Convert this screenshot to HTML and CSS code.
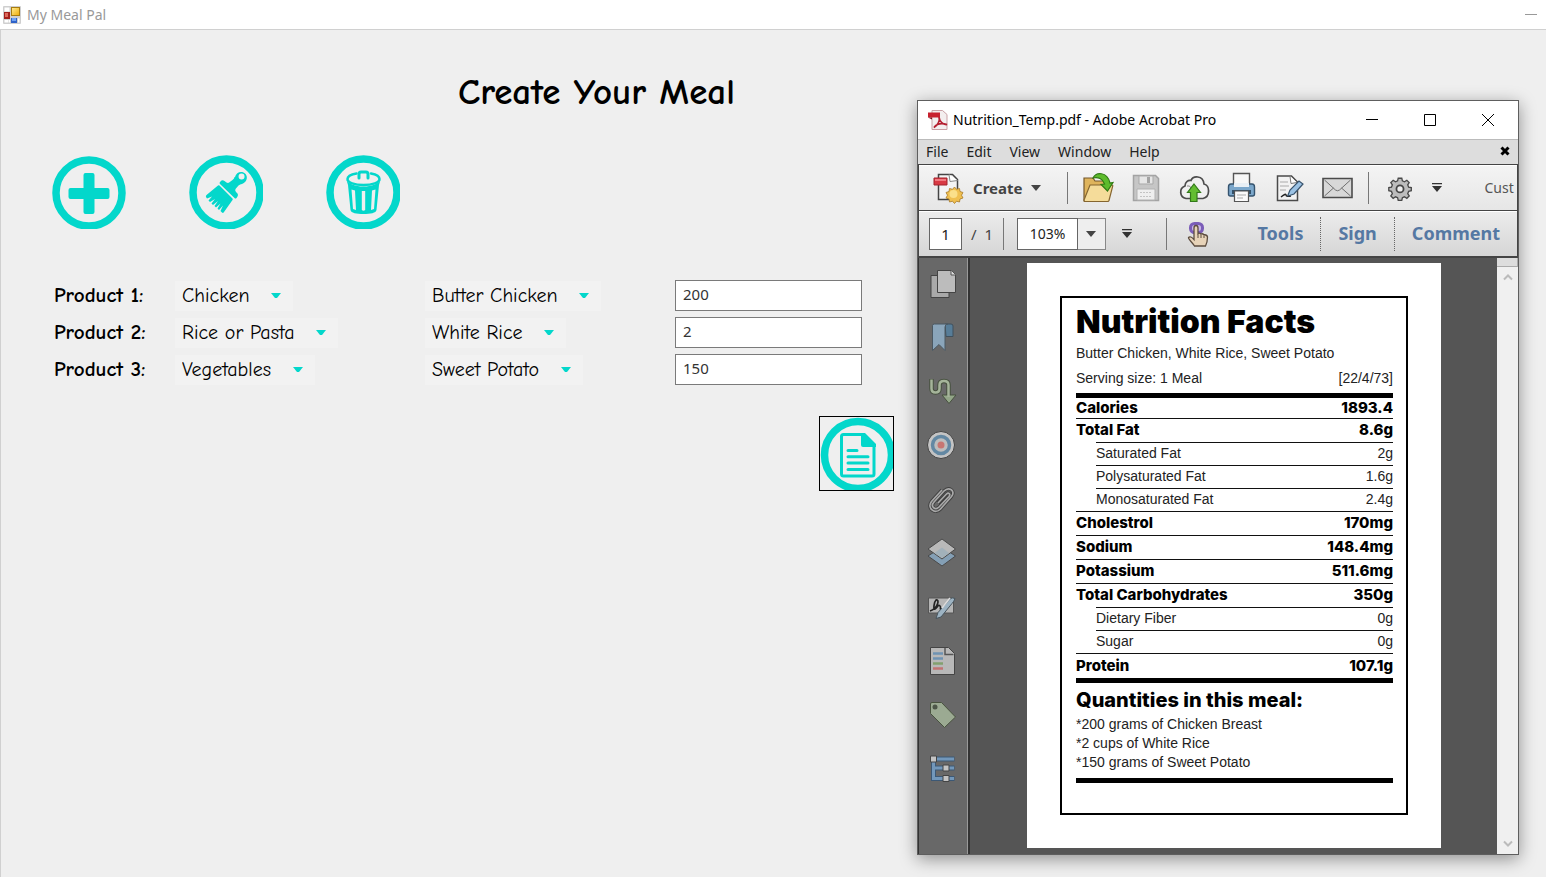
FILE: index.html
```html
<!DOCTYPE html>
<html lang="en">
<head>
<meta charset="utf-8">
<title>My Meal Pal</title>
<link rel="stylesheet" href="styles.css">
</head>
<body>
<div class="app">
  <header class="app-bar">
    <svg class="app-logo" viewBox="0 0 18 18" aria-hidden="true">
      <defs>
        <linearGradient id="gold" x1="0" y1="0" x2="1" y2="1"><stop offset="0" stop-color="#ffe98a"/><stop offset="1" stop-color="#f0b010"/></linearGradient>
      </defs>
      <rect width="18" height="18" rx="1" fill="#cfcfcf"/>
      <path d="M1.500 1.500h5v4h-5zM1.500 14h4v2.500h-4zM6 14h1v2.500H6zM15 12.500h1.500v4H15z" fill="#fff"/>
      <rect x="8" y="1" width="9" height="9" fill="#a87c10"/>
      <rect x="9" y="2" width="7" height="7" fill="url(#gold)"/>
      <rect x="1" y="6" width="6" height="7" fill="#a3201c"/>
      <rect x="2" y="7" width="3" height="4" fill="#dc6a5c"/>
      <rect x="8" y="12" width="6" height="5" fill="#2e62c8"/>
      <rect x="9" y="12" width="4" height="3" fill="#6fa2f4"/>
    </svg>
    <span class="app-name">My Meal Pal</span>
    <button class="app-min" aria-label="Minimize"></button>
  </header>

  <main class="meal">
    <h1 class="meal-title">Create Your Meal</h1>

    <div class="actions">
      <button class="round" aria-label="Add product">
        <svg viewBox="0 0 74 74"><circle cx="37" cy="38" r="33" class="ring"/><path class="teal" d="M33.500 18h7q2 0 2 2v13h13q2 0 2 2v7q0 2-2 2h-13v13q0 2-2 2h-7q-2 0-2-2V44h-13q-2 0-2-2v-7q0-2 2-2h13V20q0-2 2-2z"/></svg>
      </button>
      <button class="round" aria-label="Clear form">
        <svg viewBox="0 0 74 74"><circle cx="37.500" cy="37.500" r="33.500" class="ring"/>
          <path class="teal" fill-rule="evenodd" d="M46 22c1-4 5-6 8.500-4.500s4.500 6 2 9c-2 2.500-5 2.500-7 4l-3 3.500q-.8 1.500.5 3l1.500 1.500q1 1.500 0 3l-1 1.500q-1 1-2 0L31 29q-1-1 0-2l1.500-1.500q1.500-.8 3 .5l2 1.500q1.500 1 3-.2l3-2.300q2-1.500 2-3zM52.500 18.500a3 3 0 1 0 .1 6 3 3 0 0 0-.1-6z"/>
          <path class="teal" d="M29 30.500q.8-.6 1.500 0L43.500 43.500q.6.800 0 1.500L35 57q-1 1.500-2 .5L31.500 56l2.500-5.500-4 4.500-1.500-1.500 3-5-4.500 4-1.500-1.500 3.500-5-5 4-1.500-1.500 3.500-4.500-5 3-1.500-1.500 3.500-4-5 2-1-1.500q-.5-1 .5-2z"/></svg>
      </button>
      <button class="round" aria-label="Delete">
        <svg viewBox="0 0 74 74"><circle cx="37.500" cy="37.500" r="33.500" class="ring"/>
          <path class="line" d="M30.500 18.500c-6 1-9 3-9 5.500 0 3.500 7 6 16 6s16-2.500 16-6c0-2.500-3-4.500-8.500-5.500" stroke-width="2.500"/>
          <path class="line" d="M33 23v-4q0-2 2-2h5q2 0 2 2v4" stroke-width="3"/>
          <path class="teal" fill-rule="evenodd" d="M20.500 25l1.500 5 2.500 25c.5 3 6 4 13 4s12.500-1 13-4L53 30l1.500-5c-2 4-9 6.500-17 6.500S22.500 29 20.500 25zM25.500 34.500l1.500 19.500 3 1-1-19.500zM35.800 36v19q1.700 1.500 3.400 0V36zM46 35.500L45 55l3-1 1.500-19.500z"/></svg>
      </button>
    </div>

    <form class="products">
      <label for="cat1">Product 1:</label>
      <span class="pick"><select id="cat1"><option>Chicken</option></select><svg viewBox="0 0 10 6"><path d="M0 0h10L6 5H4z"/></svg></span>
      <span class="pick"><select aria-label="Item 1"><option>Butter Chicken</option></select><svg viewBox="0 0 10 6"><path d="M0 0h10L6 5H4z"/></svg></span>
      <input type="text" value="200" aria-label="Amount 1">

      <label for="cat2">Product 2:</label>
      <span class="pick"><select id="cat2"><option>Rice or Pasta</option></select><svg viewBox="0 0 10 6"><path d="M0 0h10L6 5H4z"/></svg></span>
      <span class="pick"><select aria-label="Item 2"><option>White Rice</option></select><svg viewBox="0 0 10 6"><path d="M0 0h10L6 5H4z"/></svg></span>
      <input type="text" value="2" aria-label="Amount 2">

      <label for="cat3">Product 3:</label>
      <span class="pick"><select id="cat3"><option>Vegetables</option></select><svg viewBox="0 0 10 6"><path d="M0 0h10L6 5H4z"/></svg></span>
      <span class="pick"><select aria-label="Item 3"><option>Sweet Potato</option></select><svg viewBox="0 0 10 6"><path d="M0 0h10L6 5H4z"/></svg></span>
      <input type="text" value="150" aria-label="Amount 3">

      <button type="button" class="report" aria-label="Create report">
        <svg viewBox="0 0 73 73"><circle cx="38" cy="38" r="33.500" class="ring"/>
          <path class="line" d="M23.500 17.500h20L54 28v29q0 2-2 2H23.500q-2 0-2-2V19.500q0-2 2-2z" stroke-width="3"/>
          <path class="teal" d="M41 16h4l11 11v3H43q-2 0-2-2z"/>
          <path class="line" d="M28 33.500h9M28 39.700h20M28 46h20M28 52.500h20" stroke-width="3"/></svg>
      </button>
    </form>
  </main>

  <section class="pdf" aria-label="Nutrition_Temp.pdf">
    <header class="pdf-bar">
      <svg class="pdf-logo" viewBox="0 0 20 20" aria-hidden="true">
        <path d="M4 .5h10.500l4.500 4V19.500H4z" fill="#f3eeee" stroke="#c9a0a4"/>
        <path d="M0 2.500h12v5H0z" fill="#c8202e"/><path d="M0 7.500h4v2z" fill="#7c0f18"/>
        <path d="M11 7c1.500 4-2 9-5 10.500 3-4 8-4.500 13-3-4 .5-7.500-3-8-7.500z" fill="none" stroke="#b51f30" stroke-width="1.700"/>
      </svg>
      <span class="pdf-name">Nutrition_Temp.pdf - Adobe Acrobat Pro</span>
      <button aria-label="Minimize"><svg viewBox="0 0 12 12"><path d="M0 5.500h12"/></svg></button>
      <button aria-label="Maximize"><svg viewBox="0 0 12 12"><path d="M.5.5h11v11H.5z"/></svg></button>
      <button aria-label="Close"><svg viewBox="0 0 12 12"><path d="M0 0l12 12M12 0L0 12"/></svg></button>
    </header>

    <nav class="menu">
      <button>File</button><button>Edit</button><button>View</button><button>Window</button><button>Help</button>
      <button class="menu-close" aria-label="Close document"><svg viewBox="0 0 10 10"><path d="M1.500 1.500l7 7M8.500 1.500l-7 7" stroke="#000" stroke-width="3"/></svg></button>
    </nav>

    <div class="tools">
      <button class="create">
        <svg class="ico" viewBox="0 0 32 32">
          <path d="M6.500 2.500h14l5 5v20h-19z" fill="#f4f4f4" stroke="#444" stroke-width="1.500"/>
          <path d="M17 2.500l1 7 7.500-1" fill="#fff" stroke="#888"/>
          <path d="M2 6h13v7H2z" fill="#d93a44" stroke="#a3222c"/><path d="M3 7h11v2H3z" fill="#f07a80"/>
          <path d="M22.500 15l2 2.300 3-.8.5 3 3 1-1.500 2.700L31 26l-3 1-.5 3-3-.8-2 2.300-2-2.300-3 .8-.5-3-3-1 1.500-2.800-1.500-2.700 3-1 .5-3 3 .8z" fill="#f0c050" stroke="#a87a28" stroke-width=".8"/>
          <circle cx="21.500" cy="22" r="4" fill="#fbe08a"/>
        </svg>
        <span>Create</span>
        <svg class="caret" viewBox="0 0 10 6"><path d="M0 0h10L5 6z"/></svg>
      </button>
      <span class="sep"></span>
      <div class="icons">
        <button aria-label="Open"><svg class="ico" viewBox="0 0 32 32">
          <path d="M2 6h9l2 3h13v20H2z" fill="#dfb45c" stroke="#75572a" stroke-width="1.200"/>
          <path d="M8 13h22q1 0 .7 1.200L27 28.500q-.3 1-1.500 1H2.500L2 28z" fill="#f5dc9a" stroke="#85652f" stroke-width="1.200"/>
          <path d="M11 6c3-6 14-7 17 5l3-.5-5.500 8.500-6.500-6.500 3.500-.5C21 7 16 4.500 11 6z" fill="#5dbb2c" stroke="#2f7a12" stroke-width="1.200"/></svg></button>
        <button aria-label="Save"><svg class="ico" viewBox="0 0 32 32">
          <path d="M3.500 3.500h22l3 3v22h-25z" fill="#c6c6c6" stroke="#a3a3a3" stroke-width="1.500"/>
          <path d="M9 4h14v8H9z" fill="#e6e6e6" stroke="#a9a9a9"/><path d="M17 5h3v6h-3z" fill="#a3a3a3"/>
          <path d="M7 17h18v11H7z" fill="#efefef" stroke="#b3b3b3"/><path d="M10 20.500h12M10 24.500h12" stroke="#c4c4c4" stroke-dasharray="2 1"/></svg></button>
        <button aria-label="Upload"><svg class="ico" viewBox="0 0 32 32">
          <path d="M8 26.500a6.500 6.500 0 0 1-1-12.500c0-4 3-6 6-5.500C15 3.500 25 3 26 12c6 1 6.500 13-1 14.500z" fill="#f0f0f0" stroke="#4c4c4c" stroke-width="1.700"/>
          <path d="M9 14q3-1 4 2" fill="none" stroke="#888"/>
          <path d="M16 12l6.500 8.500H19V29.500h-6.500v-9H9.500z" fill="#63bd31" stroke="#32791a" stroke-width="1.200"/></svg></button>
        <button aria-label="Print"><svg class="ico" viewBox="0 0 32 32">
          <path d="M7.500 1.500h16V13h-16z" fill="#f7f7f7" stroke="#555" stroke-width="1.400"/>
          <path d="M5 12h21q2.500 0 2.500 3v7q0 2-2 2h-22q-2 0-2-2v-7q0-3 2.500-3z" fill="#7ba7cb" stroke="#35536e" stroke-width="1.400"/>
          <path d="M8 11h15v4H8z" fill="#e8eff5"/><path d="M6 18h19v4H6z" fill="#34526b"/>
          <path d="M8.500 19h14v10.500h-14z" fill="#fafafa" stroke="#555" stroke-width="1.200"/><path d="M11 23h9M11 26h6" stroke="#aaa"/></svg></button>
        <button aria-label="Sign document"><svg class="ico" viewBox="0 0 32 32">
          <path d="M3.500 4h14l6 6v18.500h-20z" fill="#f2f2f2" stroke="#4a4a4a" stroke-width="1.500"/>
          <path d="M16 4.500l1 7 6-1" fill="#fff" stroke="#777"/><path d="M6 10h8M6 14h9M6 18h6" stroke="#aaa"/>
          <path d="M7 25q5-4 5-2t5 1" fill="none" stroke="#222" stroke-width="1.500"/>
          <path d="M14 23l2-5 9-9 4 3-9 10-6 2z" fill="#9bc2e4" stroke="#38536d" stroke-width="1.200"/></svg></button>
        <button aria-label="E-mail"><svg class="ico" viewBox="0 0 32 32">
          <path d="M1 6.500h29v19H1z" fill="#d8d8d8" stroke="#4b4b4b" stroke-width="1.600"/>
          <path d="M2.500 8l11 10q2 1.500 4 0l11-10M2.500 24l9-8M28.500 24l-9-8" fill="none" stroke="#707070"/></svg></button>
      </div>
      <span class="sep"></span>
      <button aria-label="Settings"><svg class="ico" viewBox="-2 -2 36 36">
        <path d="M14 5h4l.7 3 2.300 1 2.700-1.700 2.600 2.600L24.700 12.500l1 2.500 3 .6v3.500l-3 .7-1 2.500 1.700 2.700-2.700 2.600-2.700-1.700-2.300 1-.7 3h-4l-.7-3-2.300-1-2.700 1.700L5.700 25l1.700-2.700-1-2.500-3-.7v-3.500l3-.6 1-2.500L5.700 9.900l2.600-2.600L11 9l2.300-1z" fill="#bcbcbc" stroke="#484848" stroke-width="1.500"/>
        <circle cx="16" cy="17" r="4" fill="#eee" stroke="#444" stroke-width="2"/></svg></button>
      <button aria-label="More tools"><svg class="more" viewBox="0 0 10 10"><path d="M0 0h10v1.200H0zM0 3h10L5 9z"/></svg></button>
      <button class="custom">Cust</button>
    </div>

    <div class="tools second">
      <input class="page-no" type="text" value="1" aria-label="Page">
      <span class="of">/&nbsp; 1</span>
      <span class="sep"></span>
      <div class="zoom">
        <input type="text" value="103%" aria-label="Zoom">
        <button aria-label="Zoom levels"><svg class="caret" viewBox="0 0 10 6"><path d="M0 0h10L5 6z"/></svg></button>
      </div>
      <button aria-label="More view tools"><svg class="more" viewBox="0 0 10 10"><path d="M0 0h10v1.200H0zM0 3h10L5 9z"/></svg></button>
      <span class="sep"></span>
      <button class="hand" aria-label="Touch mode"><svg class="ico" viewBox="0 0 32 32">
        <rect x="6.500" y="5.500" width="12" height="9" rx="4" fill="#c9b6e8" stroke="#7b5db8" stroke-width="3"/>
        <path d="M10 20V10q0-2.500 2-2.500t2 2.500v5.500q1.500-1 3 .5 1.500-.8 3 .8 3-.3 3.500 2.200 0 5-2 9h-11C8 24 4 21 4.500 19.500q2-2 5.500 2z" fill="#e7d3b8" stroke="#5c4c3e" stroke-width="1.300"/>
        <path d="M14 16v4M17 16.500V20M20 17.500V20" stroke="#5c4c3e"/></svg></button>
      <nav class="panes"><button>Tools</button><button>Sign</button><button>Comment</button></nav>
    </div>

    <div class="viewer">
      <nav class="side">
        <button aria-label="Pages"><svg viewBox="0 0 32 32"><path d="M5 8.500h18v22H5z" fill="#a9a9a9" stroke="#444"/><path d="M11.500 3.500h14l4 4v18h-18z" fill="#bcbcbc" stroke="#444"/><path d="M25 3.500v4.500h4.500" fill="#ddd" stroke="#555"/></svg></button>
        <button aria-label="Bookmarks"><svg viewBox="0 0 32 32"><path d="M19 3h6q2 0 2 2v10.500h-7z" fill="#577d98" stroke="#40505c"/><path d="M6.500 4.500q0-1.500 2-1.500H22q-3 0-3 3v23.500l-6-6-6.500 6z" fill="#8aa5ba" stroke="#4b5963"/></svg></button>
        <button aria-label="Articles"><svg viewBox="0 0 32 32"><path d="M5.500 4v9.500q0 4 4 4t4-4V10q0-4 4.500-4t4.500 4v12" fill="none" stroke="#47513f" stroke-width="4.500"/><path d="M16 20h14l-7 8.500z" fill="#93a688" stroke="#47513f"/><path d="M5.500 4.500v9q0 4 4 4t4-4V10q0-4 4.500-4t4.500 4v12" fill="none" stroke="#a5b49a" stroke-width="2.500"/></svg></button>
        <button aria-label="Destinations"><svg viewBox="0 0 32 32"><circle cx="15" cy="16" r="13.500" fill="#c4c4c4" stroke="#444"/><circle cx="15" cy="16" r="8.500" fill="#bdbdbd" stroke="#6388a3" stroke-width="3.500"/><circle cx="15" cy="16" r="3.500" fill="#c77672"/></svg></button>
        <button aria-label="Attachments"><svg viewBox="0 0 32 32"><g fill="none"><path d="M12 20l8.500-9c2-2 4.500 0 2.500 2.500L13 24c-4 4-9-.5-5-5L18 8c5-5 12 0 7.500 5.500L14.500 26C9 32 .5 25 5.500 18.500L16 7" stroke="#404040" stroke-width="3.500"/><path d="M12 20l8.500-9c2-2 4.500 0 2.500 2.500L13 24c-4 4-9-.5-5-5L18 8c5-5 12 0 7.500 5.500L14.500 26C9 32 .5 25 5.500 18.500L16 7" stroke="#a9a9a9" stroke-width="1.700"/></g></svg></button>
        <button aria-label="Layers"><svg viewBox="0 0 32 32"><path d="M2 19l14-9 13.500 9L16 29z" fill="#849fb5" stroke="#4a4a4a"/><path d="M2 12l14-10 13.500 10L16 22z" fill="#b9b9b9" stroke="#4a4a4a"/><path d="M8.500 16L16 10.500l7 5.500L16 21z" fill="#a2b1ba"/></svg></button>
        <button aria-label="Signatures"><svg viewBox="0 0 32 32"><path d="M2.500 7h25v15h-25z" fill="#b5b5b5" stroke="#555"/><path d="M4 20c8-3 10-12 6-11-2 2-3 10-1 9s3-5 5-3-2 4 3 3" fill="none" stroke="#222" stroke-width="1.700"/><path d="M10 27.500l2-6L24 8q2-2 5-.5-1 3-3 5L15 26l-5 1.500z" fill="#9db3c2" stroke="#47545d"/><path d="M16 17l8-10" stroke="#ddd" stroke-width="1.500"/></svg></button>
        <button aria-label="Content"><svg viewBox="0 0 32 32"><path d="M4.500 2.500h18l6 6v21h-24z" fill="#b8b8b8" stroke="#444"/><path d="M19 3v6.500h8.500" fill="none" stroke="#555" stroke-width="1.500"/><path d="M7 8.500h10M7 13.500h10" stroke="#6f93b3" stroke-width="2.500"/><path d="M7 18.500h10" stroke="#83a06f" stroke-width="2.500"/><path d="M7 23.500h10" stroke="#c27373" stroke-width="2.500"/></svg></button>
        <button aria-label="Tags"><svg viewBox="0 0 32 32"><path d="M4.500 5q0-1.500 1.500-1.500h9.500L29.500 18 18.500 28.500 4.500 14.500z" fill="#9baa92" stroke="#49533f"/><circle cx="9" cy="8" r="2.500" fill="#4d5648"/></svg></button>
        <button aria-label="Model tree"><svg viewBox="0 0 32 32"><path d="M7.500 6h21M7.500 6v19.500h21M7.500 15h21" fill="none" stroke="#3c5875" stroke-width="5"/><path d="M7.500 6h20.500M7.500 6v19.500h20.500M7.500 15h20.500" fill="none" stroke="#7297ba" stroke-width="3"/><path d="M4.500 3h6v6h-6zM17 12h6v6h-6zM17 22.500h6v6h-6z" fill="#c3c3c3" stroke="#444"/></svg></button>
      </nav>

      <div class="canvas">
        <article class="sheet">
          <div class="facts">
            <h2>Nutrition Facts</h2>
            <p class="meal-line">Butter Chicken, White Rice, Sweet Potato</p>
            <p class="meal-line split"><span>Serving size: 1 Meal</span><span>[22/4/73]</span></p>
            <table>
              <tbody>
                <tr><th scope="row">Calories</th><td>1893.4</td></tr>
                <tr><th scope="row">Total Fat</th><td>8.6g</td></tr>
                <tr class="sub"><th scope="row">Saturated Fat</th><td>2g</td></tr>
                <tr class="sub"><th scope="row">Polysaturated Fat</th><td>1.6g</td></tr>
                <tr class="sub"><th scope="row">Monosaturated Fat</th><td>2.4g</td></tr>
                <tr><th scope="row">Cholestrol</th><td>170mg</td></tr>
                <tr><th scope="row">Sodium</th><td>148.4mg</td></tr>
                <tr><th scope="row">Potassium</th><td>511.6mg</td></tr>
                <tr><th scope="row">Total Carbohydrates</th><td>350g</td></tr>
                <tr class="sub"><th scope="row">Dietary Fiber</th><td>0g</td></tr>
                <tr class="sub"><th scope="row">Sugar</th><td>0g</td></tr>
                <tr><th scope="row">Protein</th><td>107.1g</td></tr>
              </tbody>
            </table>
            <h3>Quantities in this meal:</h3>
            <ul>
              <li>*200 grams of Chicken Breast</li>
              <li>*2 cups of White Rice</li>
              <li>*150 grams of Sweet Potato</li>
            </ul>
          </div>
        </article>
      </div>

      <div class="scroll">
        <span class="splitter"></span>
        <button aria-label="Scroll up"><svg viewBox="0 0 10 8"><path d="M1 6.500l4-4 4 4"/></svg></button>
        <button aria-label="Scroll down"><svg viewBox="0 0 10 8"><path d="M1 1.500l4 4 4-4"/></svg></button>
      </div>
    </div>
  </section>
</div>
</body>
</html>
```

FILE: styles.css
```css
* { box-sizing: border-box; }
body { margin: 0; background: #efefef; font-family: "Noto Sans", "Open Sans", sans-serif; color: #000; }
button { border: 0; padding: 0; margin: 0; background: none; font: inherit; color: inherit; display: flex; align-items: center; justify-content: center; }
svg { display: block; flex: none; }
h1, h2, h3, p, ul { margin: 0; padding: 0; font-weight: normal; }

.app { position: relative; min-height: 100vh; overflow: hidden; display: flex; flex-direction: column; }
.app-bar { display: flex; align-items: center; height: 29px; padding: 0 9px 0 3px; background: #fff; color: #999; font-size: 14px; }
.app-logo { width: 18px; height: 18px; }
.app-name { flex: 1; margin-left: 6px; }
.app-min { width: 12px; height: 1px; background: #999; }

.meal { flex: 1; border: solid #d0d0d0; border-width: 1px 0 0 1px; font-family: "Comic Sans MS", "Comic Neue", Inter, sans-serif; }
.meal-title { margin-top: 38px; padding-right: 354px; text-align: center; font-size: 37px; font-weight: 700; line-height: 48px; }
.actions { display: flex; gap: 63px; margin: 39px 0 0 51px; }
.round { width: 74px; height: 74px; }
.round svg { width: 74px; height: 74px; }
.ring { fill: none; stroke: #03d7cb; stroke-width: 7.500px; }
.teal { fill: #03d7cb; }
.line { fill: none; stroke: #03d7cb; stroke-linecap: round; }

.products { display: grid; grid-template-columns: 121px 250px 250px 187px; grid-auto-rows: 31px; row-gap: 6px; align-items: center; margin: 51px 0 0 53px; font-size: 20px; }
.products label { font-size: 21px; font-weight: 700; padding-bottom: 2px; }
.products input { height: 31px; min-width: 0; border: 1px solid #7a7a7a; padding: 0 7px 3px; background: #fff; color: #333; font: 15px "Noto Sans", sans-serif; }
.pick { display: inline-grid; justify-self: start; grid-template-columns: auto 22px; align-items: center; height: 30px; background: #f2f2f2; }
.pick select { grid-area: 1 / 1 / 2 / 3; height: 30px; appearance: none; border: 0; background: none; padding: 0 43px 1px 7px; font: inherit; color: #000; }
.pick svg { grid-area: 1 / 2; width: 10px; height: 6px; fill: #03d7cb; pointer-events: none; }
.report { grid-column: 4; justify-self: end; width: 75px; height: 75px; margin: 25px -32px 0 0; align-self: start; border: 1px solid #000; }
.report svg { width: 73px; height: 73px; }

.pdf { position: absolute; top: 100px; right: 27px; width: 602px; height: 755px; display: flex; flex-direction: column; border: 1px solid #5e5e5e; background: #fff; box-shadow: 0 4px 16px rgba(0, 0, 0, .4); }
.pdf-bar { display: flex; align-items: center; height: 38px; padding: 0 1px 0 10px; font-size: 14px; }
.pdf-logo { width: 20px; height: 20px; }
.pdf-name { flex: 1; margin-left: 5px; padding-bottom: 2px; }
.pdf-bar button { width: 58px; height: 38px; }
.pdf-bar button svg { width: 12px; height: 12px; fill: none; stroke: #000; }

.menu { display: flex; align-items: center; gap: 18px; height: 25px; padding: 0 8px 2px; border-top: 1px solid #bbb; background: #ddd; color: #222; font-size: 14px; }
.menu-close { margin-left: auto; }
.menu-close svg { width: 10px; height: 10px; }

.tools { display: flex; align-items: center; height: 46px; overflow: hidden; border: 1px solid #444; border-bottom: 0; background: linear-gradient(#f4f4f4, #e6e6e6); color: #444; box-shadow: inset 0 1px #fff; }
.ico { width: 32px; height: 32px; }
.create { margin-left: 13px; font-size: 15px; font-weight: 700; color: #444; }
.create span { margin: 0 9px 0 9px; }
.caret { width: 10px; height: 6px; fill: #444; }
.sep { width: 1px; height: 32px; background: #777; flex: none; }
.create + .sep { margin-left: 26px; }
.icons { display: flex; gap: 16px; margin: 0 14px 0 14px; }
.icons + .sep { margin-right: 15px; }
.more { width: 10px; height: 10px; fill: #333; margin: 0 16px; }
.custom { margin-left: 26px; font-size: 14px; color: #555; }

.second { background: linear-gradient(#ececec, #d6d6d6); font-size: 15px; }
.second input { height: 32px; border: 1px solid #666; background: #fff; padding: 0; text-align: center; font: inherit; color: #222; }
.page-no { width: 33px; margin-left: 10px; }
.of { margin: 0 10px 0 9px; }
.zoom { display: flex; margin: 0 0 0 13px; }
.second .zoom input { width: 61px; font-size: 14px; }
.zoom button { width: 28px; height: 32px; border: 1px solid #888; border-left: 0; background: #eee; }
.second > .zoom + button + .sep { margin-left: 18px; }
.hand { margin-left: 17px; }
.panes { display: flex; margin-left: auto; font-size: 18px; font-weight: 700; color: #5578a3; }
.panes button { height: 34px; padding: 0 17px 2px; }
.panes button + button { border-left: 1px dotted #666; }

.viewer { flex: 1; min-height: 0; display: flex; border-top: 2px solid #444; background: #555; }
.side { display: flex; flex-direction: column; gap: 22px; width: 52px; padding: 9px 0 0 7px; background: #686868; border: solid #333; border-width: 0 2px 0 1px; box-shadow: inset -1px 0 #999; }
.side button { width: 32px; height: 32px; }
.side svg { width: 32px; height: 32px; }
.canvas { flex: 1; padding: 5px 56px 6px 57px; }
.sheet { height: 100%; padding: 33px; background: #fff; }
.facts { height: 100%; border: 2px solid #000; padding: 4px 13px 0 14px; font: 14px "Liberation Sans", Arial, sans-serif; color: #222; }
.facts h2 { font: 900 32px/39px "Arial Black", Inter, sans-serif; color: #000; }
.meal-line { line-height: 25px; }
.split { display: flex; justify-content: space-between; }
.facts table { display: block; margin-top: 2px; border: solid #000; border-width: 5px 0; }
.facts tbody { display: block; }
.facts tr { display: flex; justify-content: space-between; align-items: center; height: 24px; padding-bottom: 2px; border-top: 1px solid #111; font: 800 15px "Arial Black", Inter, sans-serif; color: #000; }
.facts tr:first-child { height: 20px; border-top: 0; }
.facts tr:last-child { height: 25px; }
.facts tr.sub { height: 23px; margin-left: 20px; font: 14px "Liberation Sans", Arial, sans-serif; color: #222; }
.facts th, .facts td { padding: 0; font-weight: inherit; }
.facts h3 { padding-top: 2px; font: 800 20px/30px "Arial Black", Inter, sans-serif; color: #000; }
.facts ul { list-style: none; padding-bottom: 6px; border-bottom: 5px solid #000; line-height: 19px; }

.scroll { display: flex; flex-direction: column; width: 21px; background: #f0f0f0; }
.splitter { height: 9px; border: solid #aaa; border-width: 0 1px 1px 0; background: #ddd; }
.scroll button { height: 20px; }
.scroll button:last-child { margin-top: auto; }
.scroll svg { width: 10px; height: 8px; fill: none; stroke: #bbb; stroke-width: 2px; }
```
